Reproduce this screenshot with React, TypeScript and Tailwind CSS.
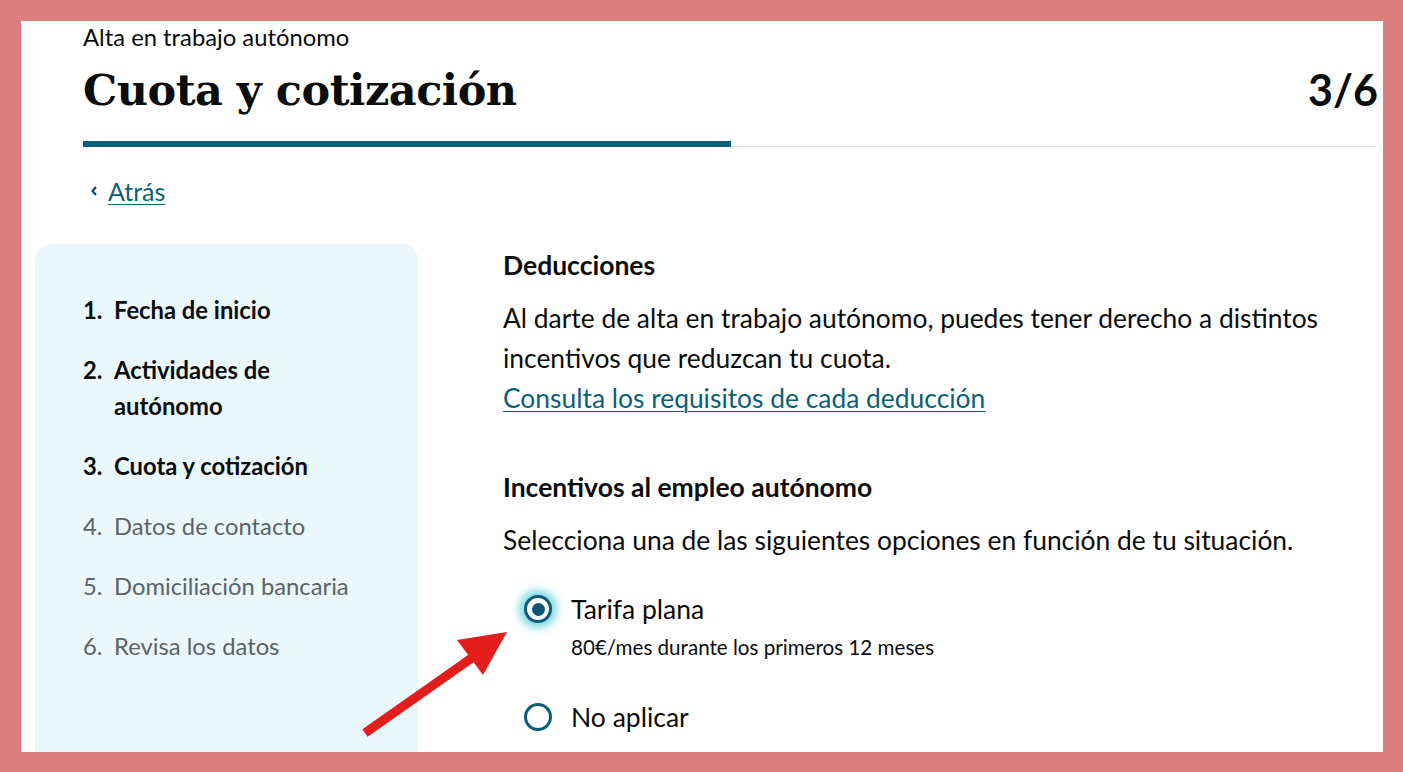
import React from "react";

const lato = { fontFamily: "Lato, 'Noto Sans', sans-serif" };

function Radio({ checked }: { checked: boolean }) {
  return (
    <span
      className={
        "flex h-[28px] w-[28px] shrink-0 items-center justify-center rounded-full border-[3px] border-[#0b5d78] bg-white " +
        (checked ? "shadow-[0_0_8px_5px_rgba(70,200,215,0.7)]" : "")
      }
    >
      {checked && <span className="h-[13px] w-[13px] rounded-full bg-[#0b5572]" />}
    </span>
  );
}

export default function App() {
  const steps = [
    { n: "1.", t: "Fecha de inicio", done: true },
    { n: "2.", t: "Actividades de autónomo", done: true },
    { n: "3.", t: "Cuota y cotización", done: true },
    { n: "4.", t: "Datos de contacto", done: false },
    { n: "5.", t: "Domiciliación bancaria", done: false },
    { n: "6.", t: "Revisa los datos", done: false },
  ];
  return (
    <div className="relative h-[772px] w-full overflow-hidden bg-[#dc7f7f] p-[21px_20px_20px_21px]" style={lato}>
      <div className="relative h-full w-full overflow-hidden bg-white text-[#0b0c0c]">
        <div className="pl-[62px] pr-[5px] pt-[2px]">
          <div className="text-[23.8px] leading-[28px]">Alta en trabajo autónomo</div>
          <div className="mt-[9px] flex items-center justify-between">
            <h1
              className="text-[43px] font-bold leading-[60px] tracking-[-0.5px]"
              style={{ fontFamily: "'DejaVu Serif', 'Liberation Serif', serif" }}
            >
              Cuota y cotización
            </h1>
            <div className="text-[43px] font-bold leading-[60px]">3/6</div>
          </div>
          <div className="mt-[21px] flex items-end">
            <div className="h-[6px] w-[648px] bg-[#0b5f78]" />
            <div className="h-px flex-1 bg-[#e0e0e0]" />
          </div>
          <div className="mt-[29px] flex items-center pl-[7px] text-[25px] leading-[30px]">
            <svg width="8" height="12" viewBox="0 0 8 12" className="mr-[10px]">
              <path d="M6 2 L2.5 6 L6 10" fill="none" stroke="#0b4a60" strokeWidth="2.2" />
            </svg>
            <a className="text-[#0b5f78] underline decoration-1 underline-offset-[3px]">Atrás</a>
          </div>
        </div>

        <div className="mt-[38px] flex pl-[14px]">
          <div className="h-[600px] w-[383px] shrink-0 rounded-[16px] bg-[#eaf8fb] pl-[48px] pr-[20px] pt-[48px]">
            <ol className="flex flex-col gap-[24px] text-[23.8px] leading-[36px]">
              {steps.map((s) => (
                <li
                  key={s.n}
                  className={"flex " + (s.done ? "font-bold text-[#0b0c0c]" : "text-[#5b6368]")}
                >
                  <span className="w-[31px] shrink-0">{s.n}</span>
                  <span className={s.n === "2." ? "w-[200px]" : ""}>{s.t}</span>
                </li>
              ))}
            </ol>
          </div>

          <div className="ml-[85px] pt-[5px]">
            <h2 className="text-[26.5px] font-bold leading-[32px]">Deducciones</h2>
            <p className="mt-[17px] w-[850px] text-[26.4px] leading-[40px]">
              Al darte de alta en trabajo autónomo, puedes tener derecho a distintos incentivos que reduzcan tu cuota.
              <br />
              <a className="text-[#0b5f78] underline decoration-1 underline-offset-[3px]">
                Consulta los requisitos de cada deducción
              </a>
            </p>
            <h2 className="mt-[53px] text-[26.5px] font-bold leading-[32px]">Incentivos al empleo autónomo</h2>
            <p className="mt-[17px] text-[26.4px] leading-[40px]">
              Selecciona una de las siguientes opciones en función de tu situación.
            </p>
            <div className="mt-[31px] flex items-start pl-[21px]">
              <div className="flex h-[36px] items-center">
                <Radio checked />
              </div>
              <div className="ml-[19px]">
                <div className="text-[26.5px] leading-[36px]">Tarifa plana</div>
                <div className="mt-[6px] text-[20.6px] leading-[28px]">80€/mes durante los primeros 12 meses</div>
              </div>
            </div>
            <div className="mt-[38px] flex items-start pl-[21px]">
              <div className="flex h-[36px] items-center">
                <Radio checked={false} />
              </div>
              <div className="ml-[19px] text-[26.5px] leading-[36px]">No aplicar</div>
            </div>
          </div>
        </div>
      </div>

      <svg className="pointer-events-none absolute left-0 top-0" width="1403" height="772" viewBox="0 0 1403 772">
        <line x1="365" y1="733" x2="476" y2="655" stroke="#e31c1c" strokeWidth="9" />
        <polygon points="507,632 457,640 483,675" fill="#e31c1c" />
      </svg>
    </div>
  );
}
